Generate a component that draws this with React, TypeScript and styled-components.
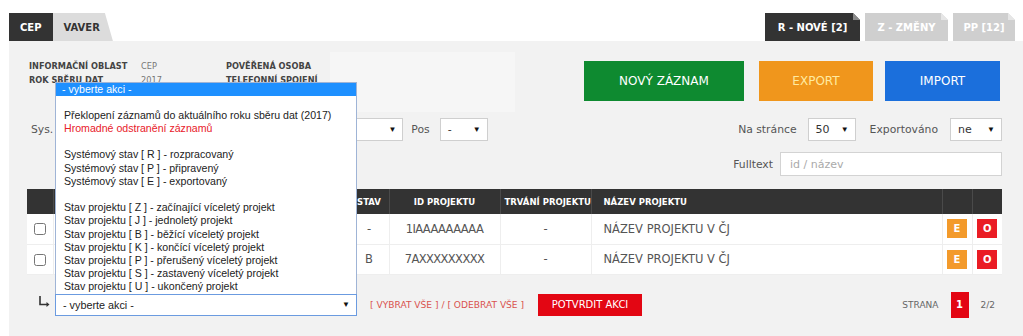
import styled, { createGlobalStyle } from 'styled-components';

const gothic = `"DejaVu Sans", "Liberation Sans", sans-serif`;
const arial = `"Liberation Sans", Arial, sans-serif`;

const GlobalStyle = createGlobalStyle`
  html, body {
    margin: 0;
    padding: 0;
    background: #fff;
    overflow: hidden;
  }
  * {
    box-sizing: border-box;
  }
`;

type Option = { label: string; kind?: 'blank' | 'danger' | 'active' };

const ACTIONS: Option[] = [
  { label: '- vyberte akci -', kind: 'active' },
  { label: '', kind: 'blank' },
  { label: 'Překlopení záznamů do aktuálního roku sběru dat (2017)' },
  { label: 'Hromadné odstranění záznamů', kind: 'danger' },
  { label: '', kind: 'blank' },
  { label: 'Systémový stav [ R ] - rozpracovaný' },
  { label: 'Systémový stav [ P ] - připravený' },
  { label: 'Systémový stav [ E ] - exportovaný' },
  { label: '', kind: 'blank' },
  { label: 'Stav projektu [ Z ] - začínající víceletý projekt' },
  { label: 'Stav projektu [ J ] - jednoletý projekt' },
  { label: 'Stav projektu [ B ] - běžící víceletý projekt' },
  { label: 'Stav projektu [ K ] - končící víceletý projekt' },
  { label: 'Stav projektu [ P ] - přerušený víceletý projekt' },
  { label: 'Stav projektu [ S ] - zastavený víceletý projekt' },
  { label: 'Stav projektu [ U ] - ukončený projekt' },
];

const ROWS = [
  { stav: '-', id: '1IAAAAAAAAA', trvani: '-', nazev: 'NÁZEV PROJEKTU V ČJ' },
  { stav: 'B', id: '7AXXXXXXXXX', trvani: '-', nazev: 'NÁZEV PROJEKTU V ČJ' },
];

const CornerArrow = () => (
  <svg width="13" height="12" viewBox="0 0 13 12">
    <path d="M2 0 V8.5 H10" fill="none" stroke="#333" strokeWidth="1.6" />
    <path d="M8.5 6 L11.5 8.5 L8.5 11 Z" fill="#333" />
  </svg>
);

const App = () => {
  return (
    <>
      <GlobalStyle />
      <TopBar>
        <TabGroup>
          <LeftTab $active>CEP</LeftTab>
          <LeftTab $slant>VAVER</LeftTab>
        </TabGroup>
        <TabGroup $gap={5}>
          <FoldTab $active $width={95}>R - NOVÉ [2]</FoldTab>
          <FoldTab $width={83}>Z - ZMĚNY</FoldTab>
          <FoldTab $width={62}>PP [12]</FoldTab>
        </TabGroup>
      </TopBar>

      <Panel>
        <HeaderRow>
          <InfoGrid>
            <InfoLabel>Informační oblast</InfoLabel>
            <InfoValue>CEP</InfoValue>
            <InfoLabel>Pověřená osoba</InfoLabel>
            <InfoLabel>Rok sběru dat</InfoLabel>
            <InfoValue>2017</InfoValue>
            <InfoLabel>Telefonní spojení</InfoLabel>
          </InfoGrid>
          <Redacted />
          <ActionButtons>
            <BigButton $color="#0e8a30" $width={160} $mr={3}>NOVÝ ZÁZNAM</BigButton>
            <BigButton $color="#f0961c" $text="#ffeaa0" $width={114}>EXPORT</BigButton>
            <BigButton $color="#1b6fdc" $width={115}>IMPORT</BigButton>
          </ActionButtons>
        </HeaderRow>

        <FilterRow>
          <FilterGroup>
            <FilterLabel $ml={4} $mr={5}>Sys.</FilterLabel>
            <SelectBox $width={345}>
              <span />
              <Caret>▼</Caret>
            </SelectBox>
            <FilterLabel $ml={8} $mr={10}>Pos</FilterLabel>
            <SelectBox $width={48}>
              <span>-</span>
              <Caret>▼</Caret>
            </SelectBox>
          </FilterGroup>
          <FilterGroup>
            <FilterLabel $mr={11}>Na stránce</FilterLabel>
            <SelectBox $width={48}>
              <span>50</span>
              <Caret>▼</Caret>
            </SelectBox>
            <FilterLabel $ml={14} $mr={12}>Exportováno</FilterLabel>
            <SelectBox $width={52}>
              <span>ne</span>
              <Caret>▼</Caret>
            </SelectBox>
          </FilterGroup>
        </FilterRow>

        <FulltextRow>
          <FilterLabel $mr={7}>Fulltext</FilterLabel>
          <TextInput placeholder="id / název" />
        </FulltextRow>

        <Table>
          <colgroup>
            <col style={{ width: 26 }} />
            <col style={{ width: 67 }} />
            <col style={{ width: 229 }} />
            <col style={{ width: 40 }} />
            <col style={{ width: 111 }} />
            <col style={{ width: 91 }} />
            <col style={{ width: 351 }} />
            <col style={{ width: 30 }} />
            <col style={{ width: 30 }} />
          </colgroup>
          <thead>
            <tr>
              <Th />
              <Th />
              <Th />
              <Th>STAV</Th>
              <Th>ID PROJEKTU</Th>
              <Th>TRVÁNÍ PROJEKTU</Th>
              <Th $left>NÁZEV PROJEKTU</Th>
              <Th />
              <Th />
            </tr>
          </thead>
          <tbody>
            {ROWS.map(row => (
              <tr key={row.id}>
                <Td>
                  <CheckBox type="checkbox" />
                </Td>
                <Td />
                <Td />
                <Td>{row.stav}</Td>
                <Td $narrow>{row.id}</Td>
                <Td>{row.trvani}</Td>
                <Td $left>{row.nazev}</Td>
                <Td>
                  <RowButton $color="#f39a2b">E</RowButton>
                </Td>
                <Td>
                  <RowButton $color="#ea1c24">O</RowButton>
                </Td>
              </tr>
            ))}
          </tbody>
        </Table>

        <BottomBar>
          <BottomLeft>
            <ArrowWrap>
              <CornerArrow />
            </ArrowWrap>
            <ActionSelect>
              <SelectBox $width={302} $height={22} $focused>
                <ArialText>- vyberte akci -</ArialText>
                <Caret>▼</Caret>
              </SelectBox>
              <OptionList>
                {ACTIONS.map((opt, i) => (
                  <OptionItem key={i} $kind={opt.kind}>
                    {opt.label}
                  </OptionItem>
                ))}
              </OptionList>
            </ActionSelect>
            <SelectLinks>[ VYBRAT VŠE ] / [ ODEBRAT VŠE ]</SelectLinks>
            <ConfirmButton>POTVRDIT AKCI</ConfirmButton>
          </BottomLeft>
          <Pager>
            <PagerLabel>STRANA</PagerLabel>
            <PageBox>1</PageBox>
            <PagerLabel>2/2</PagerLabel>
          </Pager>
        </BottomBar>
      </Panel>
    </>
  );
};

const TopBar = styled.div`
  display: flex;
  justify-content: space-between;
  align-items: flex-end;
  height: 41px;
  padding: 0 8px 0 9px;
`;

const TabGroup = styled.div<{ $gap?: number }>`
  display: flex;
  gap: ${props => props.$gap || 0}px;
`;

const LeftTab = styled.div<{ $active?: boolean; $slant?: boolean }>`
  height: 28px;
  padding: ${props => (props.$slant ? '0 13px 0 11px' : '0 11px')};
  display: flex;
  align-items: center;
  font-family: ${gothic};
  font-weight: 700;
  font-size: 10px;
  color: ${props => (props.$active ? '#fff' : '#333')};
  background: ${props => (props.$active ? '#333' : '#dcdcdc')};
  clip-path: ${props =>
    props.$slant ? 'polygon(0 0, calc(100% - 8px) 0, 100% 100%, 0 100%)' : 'none'};
`;

const FoldTab = styled.div<{ $active?: boolean; $width: number }>`
  position: relative;
  width: ${props => props.$width}px;
  height: 28px;
  display: flex;
  align-items: center;
  justify-content: center;
  font-family: ${gothic};
  font-weight: 700;
  font-size: 10px;
  color: #fff;
  background: ${props => (props.$active ? '#333' : '#cfcfcf')};
  clip-path: polygon(0 0, calc(100% - 7px) 0, 100% 7px, 100% 100%, 0 100%);

  &::after {
    content: '';
    position: absolute;
    top: 0;
    right: 0;
    width: 7px;
    height: 7px;
    background: linear-gradient(
      to bottom left,
      transparent 50%,
      ${props => (props.$active ? '#8a8a8a' : '#e6e6e6')} 50%
    );
  }
`;

const Panel = styled.div`
  margin-left: 9px;
  background: #f2f2f2;
  min-height: 295px;
  padding: 0 21px 0 18px;
`;

const HeaderRow = styled.div`
  display: flex;
  align-items: flex-start;
  padding-top: 11px;
  height: 71px;
`;

const InfoGrid = styled.div`
  display: grid;
  grid-template-columns: 112px 85px auto;
  row-gap: 2px;
  margin: 9px 0 0 2px;
`;

const InfoLabel = styled.div`
  font-family: ${gothic};
  font-weight: 700;
  font-size: 8.2px;
  line-height: 11.5px;
  color: #444;
  text-transform: uppercase;
  white-space: nowrap;
`;

const InfoValue = styled.div`
  font-family: ${gothic};
  font-size: 8.2px;
  line-height: 11.5px;
  color: #777;
`;

const Redacted = styled.div`
  width: 185px;
  height: 60px;
  margin-left: 12px;
  background: #f6f6f6;
`;

const ActionButtons = styled.div`
  display: flex;
  gap: 12px;
  margin: 9px 0 0 auto;
  padding-right: 2px;
`;

const BigButton = styled.div<{ $color: string; $text?: string; $width: number; $mr?: number }>`
  width: ${props => props.$width}px;
  height: 40px;
  margin-right: ${props => props.$mr || 0}px;
  display: flex;
  align-items: center;
  justify-content: center;
  background: ${props => props.$color};
  color: ${props => props.$text || '#fff'};
  font-family: ${gothic};
  font-size: 12px;
`;

const FilterRow = styled.div`
  display: flex;
  justify-content: space-between;
  align-items: center;
  margin-top: 6px;
  height: 23px;
`;

const FilterGroup = styled.div`
  display: flex;
  align-items: center;
`;

const FilterLabel = styled.span<{ $ml?: number; $mr?: number }>`
  margin-left: ${props => props.$ml || 0}px;
  margin-right: ${props => props.$mr || 0}px;
  font-family: ${gothic};
  font-size: 10.8px;
  color: #555;
`;

const SelectBox = styled.div<{ $width: number; $height?: number; $focused?: boolean }>`
  width: ${props => props.$width}px;
  height: ${props => props.$height || 23}px;
  display: flex;
  align-items: center;
  justify-content: space-between;
  padding: 0 6px 0 7px;
  background: #fff;
  border: 1px solid ${props => (props.$focused ? '#6b9be0' : '#cfcfcf')};
  font-family: ${gothic};
  font-size: 11px;
  color: #333;
`;

const Caret = styled.span`
  font-family: ${arial};
  font-size: 8px;
  color: #111;
`;

const FulltextRow = styled.div`
  display: flex;
  justify-content: flex-end;
  align-items: center;
  margin-top: 11px;
  height: 24px;
`;

const TextInput = styled.input`
  width: 222px;
  height: 24px;
  border: 1px solid #d3d3d3;
  padding: 0 9px;
  font-family: ${gothic};
  font-size: 11px;
  color: #333;
  outline: none;

  &::placeholder {
    color: #aaa;
  }
`;

const Table = styled.table`
  margin-top: 13px;
  width: 975px;
  border-collapse: collapse;
  table-layout: fixed;
  background: #fff;
`;

const Th = styled.th<{ $left?: boolean }>`
  height: 25px;
  padding: 0 ${props => (props.$left ? '12px' : '4px')};
  background: #333;
  color: #fff;
  font-family: ${gothic};
  font-weight: 700;
  font-size: 8.5px;
  text-align: ${props => (props.$left ? 'left' : 'center')};
  border-left: 1px solid #4a4a4a;
  white-space: nowrap;

  &:first-child {
    border-left: none;
  }
`;

const Td = styled.td<{ $left?: boolean; $narrow?: boolean }>`
  height: 30px;
  padding: 0 ${props => (props.$left ? '12px' : '4px')};
  font-family: ${gothic};
  font-size: 11.5px;
  letter-spacing: ${props => (props.$narrow ? '-0.6px' : '0')};
  color: #555;
  text-align: ${props => (props.$left ? 'left' : 'center')};
  border-left: 1px solid #eee;
  border-bottom: 1px solid #eee;
  white-space: nowrap;

  &:first-child {
    border-left: none;
  }
`;

const CheckBox = styled.input`
  width: 12px;
  height: 12px;
  margin: 0;
  vertical-align: middle;
  accent-color: #ddd;
`;

const RowButton = styled.div<{ $color: string }>`
  width: 20px;
  height: 19px;
  margin: 0 auto;
  display: flex;
  align-items: center;
  justify-content: center;
  background: ${props => props.$color};
  color: #fff;
  font-family: ${gothic};
  font-weight: 700;
  font-size: 10px;
`;

const BottomBar = styled.div`
  display: flex;
  justify-content: space-between;
  align-items: center;
  margin-top: 17px;
  height: 26px;
`;

const BottomLeft = styled.div`
  display: flex;
  align-items: center;
`;

const ArrowWrap = styled.div`
  width: 28px;
  padding-left: 11px;
  display: flex;
  margin-top: -6px;
`;

const ActionSelect = styled.div`
  position: relative;
`;

const ArialText = styled.span`
  font-family: ${arial};
  font-size: 10.8px;
  color: #222;
`;

const OptionList = styled.div`
  position: absolute;
  left: 0;
  bottom: 100%;
  width: 100%;
  background: #fff;
  border: 1px solid #9fb4d6;
  border-bottom: none;
  z-index: 5;
`;

const OptionItem = styled.div<{ $kind?: 'blank' | 'danger' | 'active' }>`
  height: 13.2px;
  line-height: 13.2px;
  padding-left: ${props => (props.$kind === 'active' ? '6px' : '8px')};
  font-family: ${arial};
  font-size: 10.6px;
  white-space: nowrap;
  color: ${props =>
    props.$kind === 'danger' ? '#e8202a' : props.$kind === 'active' ? '#fff' : '#222'};
  background: ${props => (props.$kind === 'active' ? '#1e90ff' : 'transparent')};
`;

const SelectLinks = styled.span`
  margin-left: 13px;
  font-family: ${gothic};
  font-size: 9.1px;
  color: #d9534f;
  white-space: nowrap;
`;

const ConfirmButton = styled.div`
  margin-left: 14px;
  width: 104px;
  height: 22px;
  display: flex;
  align-items: center;
  justify-content: center;
  background: #e30613;
  color: #fff;
  font-family: ${gothic};
  font-size: 10px;
`;

const Pager = styled.div`
  display: flex;
  align-items: center;
  gap: 12px;
  padding-right: 7px;
`;

const PagerLabel = styled.span`
  font-family: ${gothic};
  font-size: 9px;
  color: #666;
`;

const PageBox = styled.div`
  width: 18px;
  height: 26px;
  display: flex;
  align-items: center;
  justify-content: center;
  background: #e30613;
  color: #fff;
  font-family: ${gothic};
  font-weight: 700;
  font-size: 10px;
`;

export default App;
